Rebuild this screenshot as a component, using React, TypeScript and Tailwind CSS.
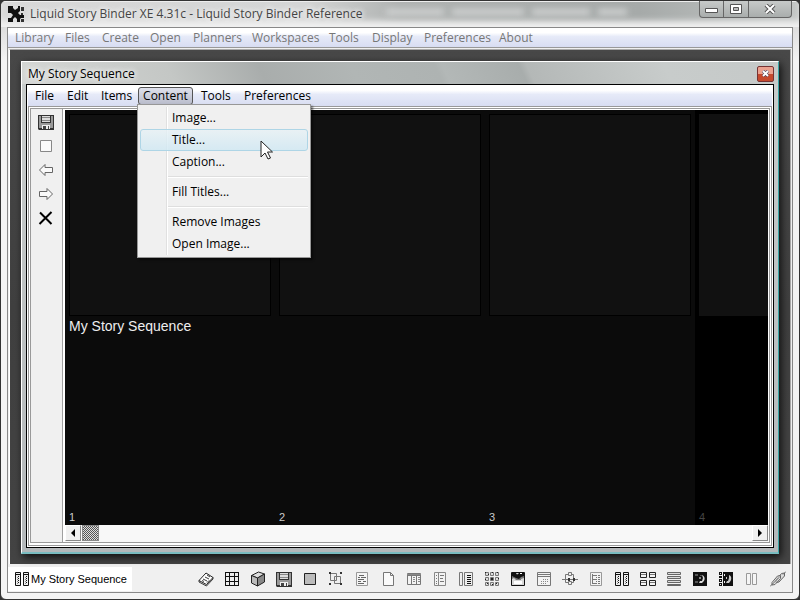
import React from "react";

type IconName =
  | "pages" | "grid" | "cube" | "save" | "square" | "group" | "note" | "page" | "table"
  | "list" | "columns" | "tiles" | "picture" | "calendar" | "flow" | "outline" | "sequence"
  | "cards" | "rows" | "media" | "film" | "split" | "link";

const art: Record<IconName, React.ReactNode> = {
  pages: (
    <g stroke="#222" fill="#fff">
      <path d="M1 9.500 8 2l7 4.500-6.500 7z" />
      <path d="M1 9.500v1.500l7.500 4 6.500-7V6.500M5 8l4 2M7 6l4 2M9 4l3 2M4 9.500l2 1M9 11.500l2-2" fill="none" strokeWidth=".9" />
    </g>
  ),
  grid: (
    <g>
      <path fill="#111" d="M1 1h14v14H1z" />
      <path fill="#eee" d="M2 2h3v3H2zM6 2h4v3H6zM11 2h3v3h-3zM2 6h3v4H2zM6 6h4v4H6zM11 6h3v4h-3zM2 11h3v3H2zM6 11h4v3H6zM11 11h3v3h-3z" />
    </g>
  ),
  cube: (
    <g stroke="#222" strokeLinejoin="round">
      <path fill="#ddd" d="M1.500 4.500 8.500 1l6 2-7 4z" />
      <path fill="#bbb" d="M1.500 4.500l6 2.500v8l-6-3z" />
      <path fill="#888" d="M7.500 7l7-4v8l-7 4z" />
    </g>
  ),
  save: (
    <g>
      <path fill="#333" d="M0 1h16v15H1l-1-1z" />
      <path fill="#999" d="M1 2h2v7h10V2h2v12H1z" />
      <path fill="#ddd" d="M4 2h8v6H4z" />
      <path fill="#888" d="M4 3h8v1H4zM4 6h8v1H4z" />
      <path fill="#eee" d="M4 11h8v4H4z" />
      <path fill="#444" d="M5 12h3v3H5zM10 12h1v3h-1z" />
    </g>
  ),
  square: <path fill="#bbb" stroke="#222" d="M2.500 2.500h11v11h-11z" />,
  group: (
    <g>
      <path fill="none" stroke="#777" d="M2.500 2.500h6v7h-6zM6.500 5.500h6v7h-6z" />
      <path fill="#333" d="M1 1h2v2H1zM12 1h2v2h-2zM1 12h2v2H1zM12 12h2v2h-2z" />
    </g>
  ),
  note: (
    <g>
      <path fill="#f5f5f5" stroke="#999" d="M2.500 1.500h11v13h-11z" />
      <path stroke="#666" d="M5 4.500h5M4 6.500h2M7 6.500h5M4 8.500h6M4 10.500h3M9 10.500h3M4 12.500h6" />
    </g>
  ),
  page: <path fill="#fafafa" stroke="#777" d="M3.500 1.500h7l3 3v10h-10zM10.500 1.500v3h3" />,
  table: (
    <g>
      <path fill="#f3f3f3" stroke="#777" d="M1.500 2.500h13v11h-13zM1.500 4.500h13M5.500 5v9M10.500 5v9" />
      <path stroke="#888" d="M7 6.500h2M7 8.500h2M7 10.500h2M12 6.500h2M12 8.500h2M12 10.500h2M1 3.500h14" />
    </g>
  ),
  list: (
    <g>
      <path fill="#f3f3f3" stroke="#888" d="M2.500 1.500h11v13h-11zM6.500 2v12" />
      <path stroke="#777" d="M4 4.500h1M4 7.500h1M4 10.500h1M8 4.500h4M8 7.500h3M8 10.500h4M4 12.500h1" />
    </g>
  ),
  columns: (
    <g>
      <path fill="#eee" stroke="#777" d="M1.500 1.500h3v13h-3zM6.500 1.500h8v13h-8z" />
      <path stroke="#111" d="M9 4.500h4M9 6.500h4M9 8.500h4M9 10.500h4M9 12.500h4" />
    </g>
  ),
  tiles: (
    <g>
      <path fill="#ddd" stroke="#777" d="M1.500 1.500h3v3h-3zM6.500 1.500h3v3h-3zM11.500 1.500h3v3h-3zM1.500 6.500h3v3h-3zM6.500 6.500h3v3h-3zM11.500 6.500h3v3h-3zM1.500 11.500h3v3h-3zM6.500 11.500h3v3h-3zM11.500 11.500h3v3h-3z" />
      <path fill="#222" d="M1 1h1v1H1zM4 3h1v1H4zM7 7h2v2H7zM8 1h1v1H8zM13 1h1v1h-1zM1 8h1v1H1zM14 7h1v1h-1zM3 12h1v1H3zM8 13h1v1H8zM12 12h1v1h-1z" />
    </g>
  ),
  picture: (
    <g>
      <path fill="#d8d8d8" stroke="#111" d="M1.500 1.500h13v13h-13z" />
      <path fill="#777" d="M2 3h12v4l-3 1v1H6L4 7 2 8z" />
      <path fill="#111" d="M2 2h4l1 2 2-2h5v3l-3 1-2 2-3-1-4-2z" />
      <path fill="#fff" d="M10 2h2v1h-2zM4 10h8v3H4z" />
    </g>
  ),
  calendar: (
    <g>
      <path fill="#f3f3f3" stroke="#777" d="M1.500 1.500h13v13h-13zM1.500 5.500h13M2 3.500h12" />
      <path stroke="#888" strokeDasharray="1 1" d="M7 8.500h6M5 10.500h8M5 12.500h5" />
    </g>
  ),
  flow: (
    <g fill="none" stroke="#777">
      <path d="M0 8.500h16M3.500 11.500v-8h8M3.500 11.500h8v-2M11.500 3.500v4" />
      <path fill="#eee" d="M6.500 1.500h3v3h-3zM6.500 10.500h3v3h-3z" />
      <path fill="#333" stroke="none" d="M6 7h2v3H6zM11 7h2v3h-2z" />
    </g>
  ),
  outline: (
    <g>
      <path fill="#f3f3f3" stroke="#999" d="M2.500 1.500h11v13h-11z" />
      <path stroke="#777" fill="none" d="M4.500 3v10M5 4.500h4M5 8.500h4M5 12.500h4M10 4.500h2M10 8.500h2M10 12.500h2M8 6.500h1M10 6.500h2M8 10.500h1M10 10.500h2" />
    </g>
  ),
  sequence: (
    <g>
      <path fill="#eee" stroke="#111" d="M1.500 1.500h5v13h-5zM9.500 1.500h5v13h-5z" />
      <path stroke="#111" d="M1 3.500h6M9 3.500h6" />
      <path stroke="#111" strokeDasharray="1 1" d="M4.500 5v8M12.500 5v8" />
      <path stroke="#888" strokeDasharray="1 1" d="M3.500 6v8M11.500 6v8" />
    </g>
  ),
  cards: (
    <g>
      <path fill="#f5f5f5" stroke="#222" d="M.5 1.500h6v5h-6zM9.500 1.500h6v5h-6zM.5 9.500h6v5h-6zM9.500 9.500h6v5h-6z" />
      <path stroke="#777" d="M1 3.500h5M10 3.500h5M1 11.500h5M10 11.500h5" />
    </g>
  ),
  rows: <path fill="#ddd" stroke="#666" d="M1.500 1.500h13v2h-13zM1.500 5.500h13v2h-13zM1.500 9.500h13v2h-13zM1.500 13.500h13v1h-13z" />,
  media: (
    <g>
      <path fill="#111" d="M1 1h14v14H1z" />
      <path fill="#555" d="M3 3h3v2H3zM8 4h2v1H8zM3 10h3v2H3z" />
      <path fill="#ddd" d="M10 4c3 1 4 5 0 8H7l1-2h2l1-3z" />
      <path fill="#888" d="M7 6h2v2H7z" />
    </g>
  ),
  film: (
    <g>
      <path fill="#111" d="M1 1h3v3H1zM1 5h3v2H1zM1 8h3v3H1zM1 12h3v3H1zM5 1h10v14H5z" />
      <path fill="#eee" d="M4 2h1v1H4zM4 6h1v1H4zM4 9h1v1H4zM4 13h1v1H4zM2 2h1v1H2zM2 9h1v1H2zM2 13h1v1H2zM6 3h1v2H6zM6 10h1v2H6z" />
      <path fill="#ccc" d="M11 4c3 1 3 5 0 8H8l1-2h1l1-3zM8 6h1v2H8z" />
    </g>
  ),
  split: <path fill="#f5f5f5" stroke="#999" d="M2.500 2.500h4v11h-4zM8.500 2.500h4v11h-4z" />,
  link: (
    <g fill="#ddd" stroke="#666">
      <path d="M6 9l5.500-6.500 3-.5v3L9 11l-3 .5z" />
      <path d="M2 11.500 7.500 5l3-.5v3l-5.500 6-3 .5z" fillOpacity=".6" />
      <path fill="none" d="M0 15.500 9 6.500M13 3.500 16 .5" />
    </g>
  ),
};

function Icon({ name }: { name: IconName }) {
  return (
    <svg width="16" height="16" viewBox="0 0 16 16" className="shrink-0" aria-hidden="true">
      {art[name]}
    </svg>
  );
}

const statusIcons: IconName[] = [
  "pages", "grid", "cube", "save", "square", "group", "note", "page", "table", "list",
  "columns", "tiles", "picture", "calendar", "flow", "outline", "sequence", "cards", "rows",
  "media", "film", "split", "link",
];

const mainMenu = [
  { label: "Library", width: "w-[50px]" },
  { label: "Files", width: "w-[37px]" },
  { label: "Create", width: "w-12" },
  { label: "Open", width: "w-[43px]" },
  { label: "Planners", width: "w-[59px]" },
  { label: "Workspaces", width: "w-[77px]" },
  { label: "Tools", width: "w-[43px]" },
  { label: "Display", width: "w-[52px]" },
  { label: "Preferences", width: "w-[75px]" },
  { label: "About", width: "w-12" },
];

const contentMenu = [["Image...", "Title...", "Caption..."], ["Fill Titles..."], ["Remove Images", "Open Image..."]];

function ContentMenu() {
  return (
    <div role="menu" className="absolute top-[17px] -left-px z-10 w-[174px] border border-[#979797] bg-[#f0f0f0] p-0.5 shadow-[2px_2px_2px_rgba(0,0,0,0.5)]">
      <div className="absolute top-0.5 bottom-0.5 left-7 w-0.5 border-l border-[#e0e0e0] bg-white" />
      {contentMenu.map((group, g) => (
        <div key={g}>
          {g > 0 && (
            <div role="separator" className="ml-7 flex h-2 items-center">
              <div className="h-0.5 w-full border-t border-[#dedede] bg-white" />
            </div>
          )}
          {group.map((label) => (
            <button
              key={label}
              role="menuitem"
              className={`relative block h-[22px] w-full rounded-[3px] border pl-[31px] text-left ${
                label === "Title..." ? "border-[#aed5e6] bg-linear-to-b from-[#e7f1f5]/80 to-[#cfe8f3]/80" : "border-transparent"
              }`}
            >
              {label}
            </button>
          ))}
        </div>
      ))}
      <svg className="absolute top-[35px] left-[122px]" width="13" height="20" viewBox="0 0 13 20" aria-hidden="true">
        <path d="M1 1v16l4-4 3 6 2.500-1-3-6h5z" fill="#fff" stroke="#222" />
      </svg>
    </div>
  );
}

function Menus() {
  const item = "h-[18px] rounded-[3px] border border-transparent text-left";
  return (
    <nav className="flex h-[21px] items-center bg-linear-to-b from-white from-25% via-[#e6eaf8] via-45% to-[#d8ddf2] pl-px text-black">
      <button className={`${item} w-8 pl-[5px]`}>File</button>
      <button className={`${item} w-[34px] pl-[5px]`}>Edit</button>
      <button className={`${item} w-[43px] pl-[5px]`}>Items</button>
      <div className="relative">
        <button className="flex h-[18px] w-[55px] items-center justify-center rounded-[3px] border border-[#555] bg-linear-to-b from-[#dfe1ec] to-[#b9bccb]">
          Content
        </button>
        <ContentMenu />
      </div>
      <button className={`${item} w-[43px] pl-[7px]`}>Tools</button>
      <button className={`${item} w-20 pl-[7px]`}>Preferences</button>
    </nav>
  );
}

function SideTools() {
  const button = "flex h-6 w-full items-center justify-center";
  return (
    <aside className="w-8 shrink-0 border-r border-[#a0a0a0] bg-[#f0f0f0] pt-px pr-px">
      <button aria-label="Save" className={button}><Icon name="save" /></button>
      <button aria-label="Blank" className={button}>
        <svg width="16" height="16"><path d="M2.500 2.500h11v11h-11z" fill="#fafafa" stroke="#888" /></svg>
      </button>
      <button aria-label="Back" className={button}>
        <svg width="16" height="16"><path d="M1.500 8 7 2.500v3h7.500v5H7v3Z" fill="#fafafa" stroke="#666" /></svg>
      </button>
      <button aria-label="Forward" className={button}>
        <svg width="16" height="16"><path d="M14.500 8 9 2.500v3H1.500v5H9v3Z" fill="#fafafa" stroke="#666" /></svg>
      </button>
      <button aria-label="Delete" className={button}>
        <svg width="16" height="16"><path d="M2 2.500 13.500 14M13.500 2 1.500 14" fill="none" stroke="#000" strokeWidth="2" /></svg>
      </button>
    </aside>
  );
}

function Strip() {
  return (
    <div className="flex min-h-0 flex-1 overflow-hidden bg-black font-['Liberation_Sans',sans-serif]">
      {[1, 2, 3, 4].map((n) => (
        <section key={n} className={`flex w-[210px] shrink-0 flex-col p-1 pb-0 ${n < 4 ? "bg-[#0b0b0b]" : "bg-black"}`}>
          <div className={`h-[202px] w-[202px] border bg-[#111] ${n < 4 ? "border-black" : "border-[#111]"}`} />
          <div className="h-5 whitespace-nowrap text-[14px] leading-5 text-[#eee]">{n === 1 && "My Story Sequence"}</div>
          <div className={`mt-auto text-[11px] leading-4 ${n < 4 ? "text-[#ccc]" : "text-[#444]"}`}>{n}</div>
        </section>
      ))}
    </div>
  );
}

function ScrollBar() {
  const arrow = "flex h-4 w-4 items-center justify-center border border-[#888] border-t-white border-l-white bg-[#f0f0f0]";
  return (
    <div className="flex h-[17px] bg-[#f8f8f8]">
      <button aria-label="Scroll left" className={arrow}>
        <svg width="4" height="8"><path d="M4 0v8L0 4z" /></svg>
      </button>
      <div className="ml-px h-4 w-[17px] border border-[#888] bg-[repeating-conic-gradient(#555_0_25%,#ddd_0_50%)] bg-size-[2px_2px]" />
      <button aria-label="Scroll right" className={`${arrow} ml-auto`}>
        <svg width="4" height="8"><path d="M0 0v8l4-4z" /></svg>
      </button>
    </div>
  );
}

function SequenceWindow() {
  return (
    <section className="flex min-w-0 flex-1 flex-col border-t border-r border-b-2 border-l border-t-white border-r-[#3aa6a6] border-b-[#79bcc0] border-l-white bg-linear-to-b from-[#c8cccb] to-[#b4b8ba] px-1 pb-1 shadow-[2px_3px_8px_rgba(0,0,0,0.8)]">
      <header className="-mx-1 flex h-[22px] shrink-0 items-center justify-between bg-[linear-gradient(65deg,#d5d7d5_0%,#c4c7c5_20%,#a9adac_32%,#b1b6b5_44%,#aeb3b2_55%,#b3b8b7_56%,#a8adac_66%,#b4b8b7_67%,#c8cccb_85%,#c5c9c8_100%)] pt-px pr-1 pl-1.5">
        <h2 className="[text-shadow:0_0_6px_white,0_0_6px_white]">My Story Sequence</h2>
        <button aria-label="Close" className="flex h-4 w-[17px] items-center justify-center rounded-[2px] border border-[#733] bg-linear-to-b from-[#eba18f] from-50% to-[#c5492e] to-50%">
          <svg width="7" height="7"><path d="M1 1l5 5M6 1 1 6" stroke="#335" strokeWidth="3" /><path d="M1 1l5 5M6 1 1 6" stroke="#fff" strokeWidth="2" /></svg>
        </button>
      </header>
      <div className="flex min-h-0 flex-1 flex-col border border-black bg-white px-px pb-px">
        <Menus />
        <div className="flex min-h-0 flex-1 flex-col border border-[#999] bg-white p-px pb-0.5">
          <div className="flex min-h-0 flex-1 border border-[#999]">
            <SideTools />
            <div className="flex min-w-0 flex-1 flex-col border-l-2 border-l-white bg-white pt-px pr-px">
              <Strip />
              <ScrollBar />
            </div>
          </div>
        </div>
      </div>
    </section>
  );
}

function WindowButtons() {
  return (
    <div className="mr-[7px] flex h-[17px] shrink-0 divide-x divide-[#666] rounded-b-[4px] border border-t-0 border-[#666] bg-linear-to-b from-[#c7cac9] to-[#a9adac]">
      <button aria-label="Minimize" className="flex w-6 items-center justify-center pt-0.5">
        <svg width="13" height="5"><path d="M.5.5h12v4H.5z" fill="#fff" stroke="#555" /></svg>
      </button>
      <button aria-label="Maximize" className="flex w-[25px] items-center justify-center">
        <svg width="12" height="10"><path d="M.5.5h11v9H.5z" fill="#fff" stroke="#555" /><path d="M3.500 3.500h5v3h-5z" fill="#bbb" stroke="#555" /></svg>
      </button>
      <button aria-label="Close" className="flex w-[42px] items-center justify-center">
        <svg width="12" height="10"><path d="M2 1l8 8M10 1 2 9" stroke="#555" strokeWidth="4" /><path d="M2 1l8 8M10 1 2 9" stroke="#fff" strokeWidth="2" /></svg>
      </button>
    </div>
  );
}

export default function App() {
  return (
    <div className="bg-[#333] font-['Open_Sans','Noto_Sans',sans-serif] text-[12px] leading-4 text-black">
      <main className="flex h-screen min-h-[400px] flex-col overflow-hidden rounded-[6px] border border-[#333] bg-linear-to-b from-[#ccc] to-[#f4f4f4] to-10% px-1.5 pb-1.5">
        <header className="-mx-1.5 flex h-[26px] shrink-0 items-start bg-[linear-gradient(to_right,#d8d8d8_0%,#d4d5d5_38%,#b0b3b2_50%,#a6aaa9_80%,#c4c7c6_100%)] shadow-[inset_0_-8px_6px_-2px_#f0f0f0,inset_0_1px_0_#eee]">
          <svg className="mt-[5px] ml-[7px] shrink-0" width="16" height="16" viewBox="0 0 16 16" aria-hidden="true">
            <path fill="#ddd" d="M0 0h16v16H0z" />
            <path fill="#111" d="M0 0h5v2l2 2 3-2V0h2v5l-2 2 2 2h4v3h-3l-1 1v3H9v-3l-2-2-2 2v3H0v-4h3l2-3-2-2H0z" />
            <path fill="#333" d="M13 1h3v4h-3zM13 7h2v2h-2zM13 13h3v3h-3z" />
          </svg>
          <h1 className="ml-1.5 pt-[5px] whitespace-nowrap text-[#444] [text-shadow:0_0_6px_white,0_0_6px_white]">
            Liquid Story Binder XE 4.31c - Liquid Story Binder Reference
          </h1>
          <div className="mx-6 mt-2 flex h-1.5 min-w-0 flex-1 gap-2 blur-[3px]" aria-hidden="true">
            <div className="w-1/5 bg-[#d0d2d2]" />
            <div className="w-1/4 bg-[#d0d2d2]" />
            <div className="w-1/5 bg-[#d0d2d2]" />
            <div className="w-[10%] bg-[#d0d2d2]" />
          </div>
          <WindowButtons />
        </header>
        <div className="flex min-h-0 flex-1 flex-col border border-[#888] bg-[#f0f0f0]">
          <nav className="flex h-[19px] shrink-0 items-center bg-linear-to-b from-white from-25% via-[#e6eaf8] via-45% to-[#d8ddf2] pt-px pl-[7px] text-[#777]">
            {mainMenu.map(({ label, width }) => (
              <button key={label} className={`${width} shrink-0 text-left`}>{label}</button>
            ))}
          </nav>
          <div className="flex min-h-0 flex-1 flex-col border-t border-[#999] pt-px pr-px pl-px">
            <div className="flex min-h-0 flex-1 border border-b-0 border-[#aaa] border-l-white bg-linear-to-b from-[#484848] via-[#404040] to-[#444] pt-[11px] pr-[11px] pb-2.5 pl-[11px]">
              <SequenceWindow />
            </div>
          </div>
          <footer className="flex h-[28px] shrink-0 items-center justify-between pt-px pr-px">
            <button className="flex h-6 w-[124px] items-center gap-px bg-white pl-1.5 font-['Liberation_Sans',sans-serif] text-[11px]">
              <Icon name="sequence" />
              My Story Sequence
            </button>
            <div className="flex">
              {statusIcons.map((name) => (
                <button key={name} aria-label={name} className="flex h-6 w-[26px] items-center justify-center">
                  <Icon name={name} />
                </button>
              ))}
            </div>
          </footer>
        </div>
      </main>
    </div>
  );
}
